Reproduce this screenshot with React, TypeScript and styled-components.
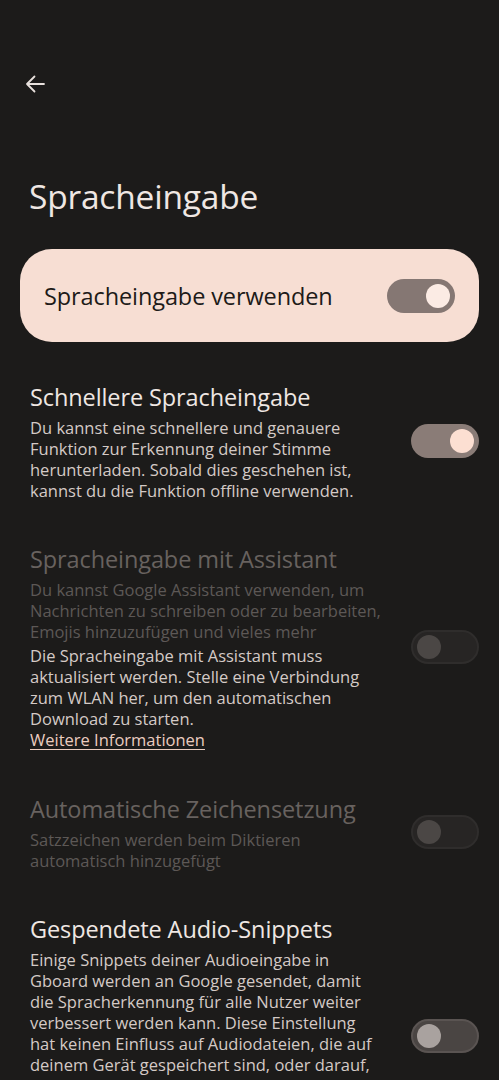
import * as React from "react";
import styled, { createGlobalStyle, css } from "styled-components";

const colors = {
  bg: "#1c1b1a",
  card: "#f7ded3",
  cardText: "#201a18",
  title: "#efe7e3",
  body: "#d4cac6",
  disabled: "#68625f",
  disabledBody: "#5d5856",
  link: "#ebcdc0",
  trackOn: "#8a7c77",
  trackOnCard: "#857773",
  thumbOn: "#fcdfd2",
  thumbCard: "#fbebe4",
  trackOff: "#4a4543",
  trackOffBorder: "#5a5452",
  thumbOff: "#a9a29f",
  trackDisabled: "#272524",
  trackDisabledBorder: "#2f2d2c",
  thumbDisabled: "#4b4745"
};

const GlobalStyle = createGlobalStyle`
  html, body {
    margin: 0;
    padding: 0;
    background: ${colors.bg};
  }
  body {
    font-family: "Open Sans", "Noto Sans", sans-serif;
    -webkit-font-smoothing: antialiased;
  }
`;

const Page = styled.div`
  width: 499px;
  height: 1080px;
  overflow: hidden;
  background: ${colors.bg};
`;

const TopBar = styled.div`
  height: 176px;
  padding: 71px 0 0 22px;
  box-sizing: border-box;
`;

const BackButton = styled.button`
  display: flex;
  align-items: center;
  justify-content: center;
  width: 26px;
  height: 26px;
  padding: 0;
  border: none;
  background: transparent;
  color: #e8e1dd;
`;

const PageTitle = styled.h1`
  margin: 0 0 0 29px;
  font-size: 33.5px;
  font-weight: 400;
  line-height: 40px;
  color: ${colors.title};
  letter-spacing: -0.2px;
`;

const MainCard = styled.div`
  margin: 33px 20px 0 20px;
  height: 93px;
  border-radius: 32px;
  background: ${colors.card};
  display: flex;
  align-items: center;
  justify-content: space-between;
  padding: 0 24px;
  box-sizing: border-box;
`;

const CardLabel = styled.span`
  font-size: 23.5px;
  color: ${colors.cardText};
  letter-spacing: -0.1px;
`;

const List = styled.div`
  display: flex;
  flex-direction: column;
  margin-top: 18px;
`;

const Row = styled.div`
  display: flex;
  align-items: center;
  justify-content: space-between;
  padding: 21px 20px 21px 30px;
`;

const TextBlock = styled.div`
  display: flex;
  flex-direction: column;
`;

const RowTitle = styled.div<{ $disabled?: boolean }>`
  font-size: 23.5px;
  line-height: 32px;
  margin-bottom: 4px;
  color: ${p => (p.$disabled ? colors.disabled : colors.title)};
  letter-spacing: -0.1px;
`;

const RowText = styled.div<{ $disabled?: boolean; $gap?: number }>`
  font-size: 16.5px;
  line-height: 21px;
  white-space: pre-line;
  margin-top: ${p => p.$gap ?? 0}px;
  color: ${p => (p.$disabled ? colors.disabledBody : colors.body)};
`;

const MoreLink = styled.a`
  font-size: 16.5px;
  line-height: 21px;
  color: ${colors.link};
  text-decoration: underline;
  text-underline-offset: 3px;
  text-decoration-thickness: 1px;
`;

type SwitchState = "card" | "on" | "off" | "disabled";

const Track = styled.div<{ $state: SwitchState }>`
  position: relative;
  flex: none;
  width: 68px;
  height: 34px;
  border-radius: 17px;
  box-sizing: border-box;
  ${p =>
    p.$state === "card" &&
    css`
      background: ${colors.trackOnCard};
    `}
  ${p =>
    p.$state === "on" &&
    css`
      background: ${colors.trackOn};
    `}
  ${p =>
    p.$state === "off" &&
    css`
      background: ${colors.trackOff};
      border: 2px solid ${colors.trackOffBorder};
    `}
  ${p =>
    p.$state === "disabled" &&
    css`
      background: ${colors.trackDisabled};
      border: 2px solid ${colors.trackDisabledBorder};
    `}
`;

const Thumb = styled.div<{ $state: SwitchState }>`
  position: absolute;
  top: 50%;
  width: 24px;
  height: 24px;
  border-radius: 50%;
  transform: translateY(-50%);
  ${p =>
    p.$state === "card" || p.$state === "on"
      ? css`
          right: 5px;
          background: ${p.$state === "card" ? colors.thumbCard : colors.thumbOn};
        `
      : css`
          left: 4px;
          background: ${p.$state === "off" ? colors.thumbOff : colors.thumbDisabled};
        `}
`;

const Switch = ({ state }: { state: SwitchState }) => (
  <Track $state={state}>
    <Thumb $state={state} />
  </Track>
);

const BackArrow = () => (
  <svg width="22" height="22" viewBox="0 0 22 22" fill="none">
    <path
      d="M20 11H3M10.5 3.5L3 11l7.5 7.5"
      stroke="currentColor"
      strokeWidth="1.8"
      strokeLinecap="round"
      strokeLinejoin="round"
    />
  </svg>
);

export default function App() {
  return (
    <Page>
      <GlobalStyle />
      <TopBar>
        <BackButton aria-label="Zurück">
          <BackArrow />
        </BackButton>
      </TopBar>
      <PageTitle>Spracheingabe</PageTitle>
      <MainCard>
        <CardLabel>Spracheingabe verwenden</CardLabel>
        <Switch state="card" />
      </MainCard>
      <List>
        <Row>
          <TextBlock>
            <RowTitle>Schnellere Spracheingabe</RowTitle>
            <RowText>
              {"Du kannst eine schnellere und genauere\nFunktion zur Erkennung deiner Stimme\nherunterladen. Sobald dies geschehen ist,\nkannst du die Funktion offline verwenden."}
            </RowText>
          </TextBlock>
          <Switch state="on" />
        </Row>
        <Row>
          <TextBlock>
            <RowTitle $disabled>Spracheingabe mit Assistant</RowTitle>
            <RowText $disabled>
              {"Du kannst Google Assistant verwenden, um\nNachrichten zu schreiben oder zu bearbeiten,\nEmojis hinzuzufügen und vieles mehr"}
            </RowText>
            <RowText $gap={3}>
              {"Die Spracheingabe mit Assistant muss\naktualisiert werden. Stelle eine Verbindung\nzum WLAN her, um den automatischen\nDownload zu starten."}
            </RowText>
            <div>
              <MoreLink href="#">Weitere Informationen</MoreLink>
            </div>
          </TextBlock>
          <Switch state="disabled" />
        </Row>
        <Row>
          <TextBlock>
            <RowTitle $disabled>Automatische Zeichensetzung</RowTitle>
            <RowText $disabled>
              {"Satzzeichen werden beim Diktieren\nautomatisch hinzugefügt"}
            </RowText>
          </TextBlock>
          <Switch state="disabled" />
        </Row>
        <Row>
          <TextBlock>
            <RowTitle>Gespendete Audio-Snippets</RowTitle>
            <RowText>
              {"Einige Snippets deiner Audioeingabe in\nGboard werden an Google gesendet, damit\ndie Spracherkennung für alle Nutzer weiter\nverbessert werden kann. Diese Einstellung\nhat keinen Einfluss auf Audiodateien, die auf\ndeinem Gerät gespeichert sind, oder darauf,\nwie Google diese in Echtzeit verarbeitet.\nDie Snippets werden nicht mit deinem\nGoogle-Konto verknüpft und nur zur\nVerbesserung der Erkennung verwendet."}
            </RowText>
          </TextBlock>
          <Switch state="off" />
        </Row>
      </List>
    </Page>
  );
}
